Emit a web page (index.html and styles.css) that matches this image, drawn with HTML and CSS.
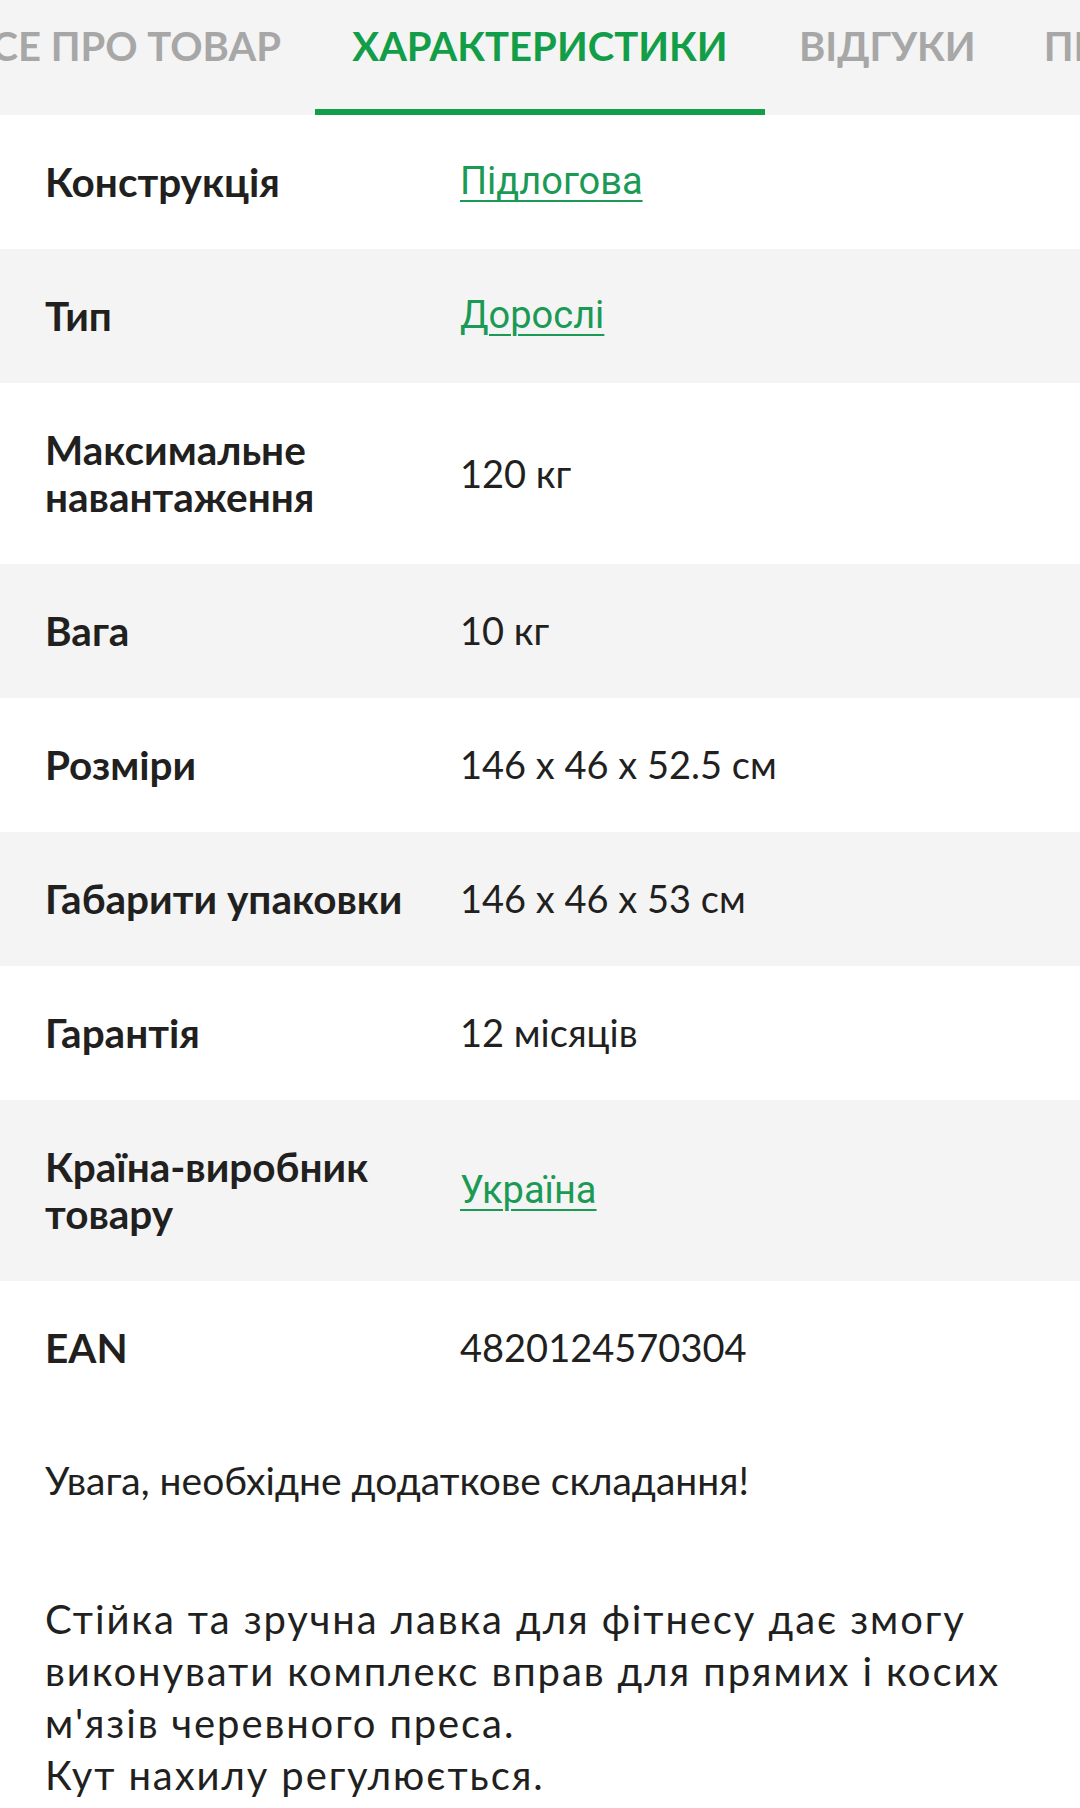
FILE: index.html
```html
<!DOCTYPE html>
<html lang="uk">
<head>
<meta charset="utf-8">
<title>Характеристики</title>
<link rel="stylesheet" href="styles.css">
</head>
<body>
<nav class="tabs">
  <div class="tab tab-first">ВСЕ ПРО ТОВАР</div>
  <div class="tab tab-active">ХАРАКТЕРИСТИКИ</div>
  <div class="tab">ВІДГУКИ</div>
  <div class="tab">ПИТАННЯ</div>
</nav>

<section class="specs">
  <div class="row">
    <div class="label">Конструкція</div>
    <div class="value"><a class="link" href="#">Підлогова</a></div>
  </div>
  <div class="row row-alt">
    <div class="label">Тип</div>
    <div class="value"><a class="link" href="#">Дорослі</a></div>
  </div>
  <div class="row">
    <div class="label">Максимальне навантаження</div>
    <div class="value">120 кг</div>
  </div>
  <div class="row row-alt">
    <div class="label">Вага</div>
    <div class="value">10 кг</div>
  </div>
  <div class="row">
    <div class="label">Розміри</div>
    <div class="value">146 x 46 x 52.5 см</div>
  </div>
  <div class="row row-alt">
    <div class="label">Габарити упаковки</div>
    <div class="value">146 x 46 x 53 см</div>
  </div>
  <div class="row">
    <div class="label">Гарантія</div>
    <div class="value">12 місяців</div>
  </div>
  <div class="row row-alt">
    <div class="label">Країна-виробник товару</div>
    <div class="value"><a class="link" href="#">Україна</a></div>
  </div>
  <div class="row">
    <div class="label">EAN</div>
    <div class="value">4820124570304</div>
  </div>
</section>

<p class="note">Увага, необхідне додаткове складання!</p>

<p class="desc">Стійка та зручна лавка для фітнесу дає змогу виконувати комплекс вправ для прямих і косих м'язів черевного преса.<br>Кут нахилу регулюється.</p>
</body>
</html>
```

FILE: styles.css
```css
html, body {
  margin: 0;
  padding: 0;
  background: #ffffff;
}

body {
  width: 1080px;
  overflow: hidden;
  font-family: Lato, "Noto Sans", sans-serif;
  color: #221f1f;
}

.tabs {
  display: flex;
  height: 115px;
  background: #f4f4f4;
  overflow: hidden;
}

.tab {
  flex: 0 0 auto;
  box-sizing: border-box;
  height: 115px;
  padding: 26px 34px 0;
  font-size: 40px;
  line-height: 40px;
  font-weight: 700;
  color: #a7a7a7;
  white-space: nowrap;
}

.tab-first {
  flex: 0 0 315px;
  min-width: 0;
  display: flex;
  justify-content: flex-end;
  align-items: flex-start;
}

.tab-active {
  flex: 0 0 450px;
  min-width: 0;
  text-align: center;
  color: #129d48;
  border-bottom: 6px solid #129d48;
}

.specs {
  display: flex;
  flex-direction: column;
}

.row {
  display: grid;
  grid-template-columns: 395px 1fr;
  column-gap: 20px;
  align-items: center;
  padding: 43px 45px 44px;
  background: #ffffff;
}

.row-alt {
  background: #f4f4f4;
}

.label {
  font-size: 40.5px;
  line-height: 47px;
  font-weight: 700;
}

.value {
  font-size: 38px;
  line-height: 47px;
  height: auto;
  font-weight: 400;
}

.link {
  display: inline-block;
  vertical-align: top;
  font-family: Roboto, "Liberation Sans", sans-serif;
  font-size: 38px;
  line-height: 47px;
  color: #1b9a56;
  text-decoration: underline;
  text-decoration-thickness: 2px;
  text-underline-offset: 6px;
}

.note {
  margin: 42px 45px 0;
  font-size: 39px;
  line-height: 47px;
}

.desc {
  margin: 89px 45px 0;
  font-size: 40px;
  line-height: 52px;
  letter-spacing: 1.9px;
}
```
